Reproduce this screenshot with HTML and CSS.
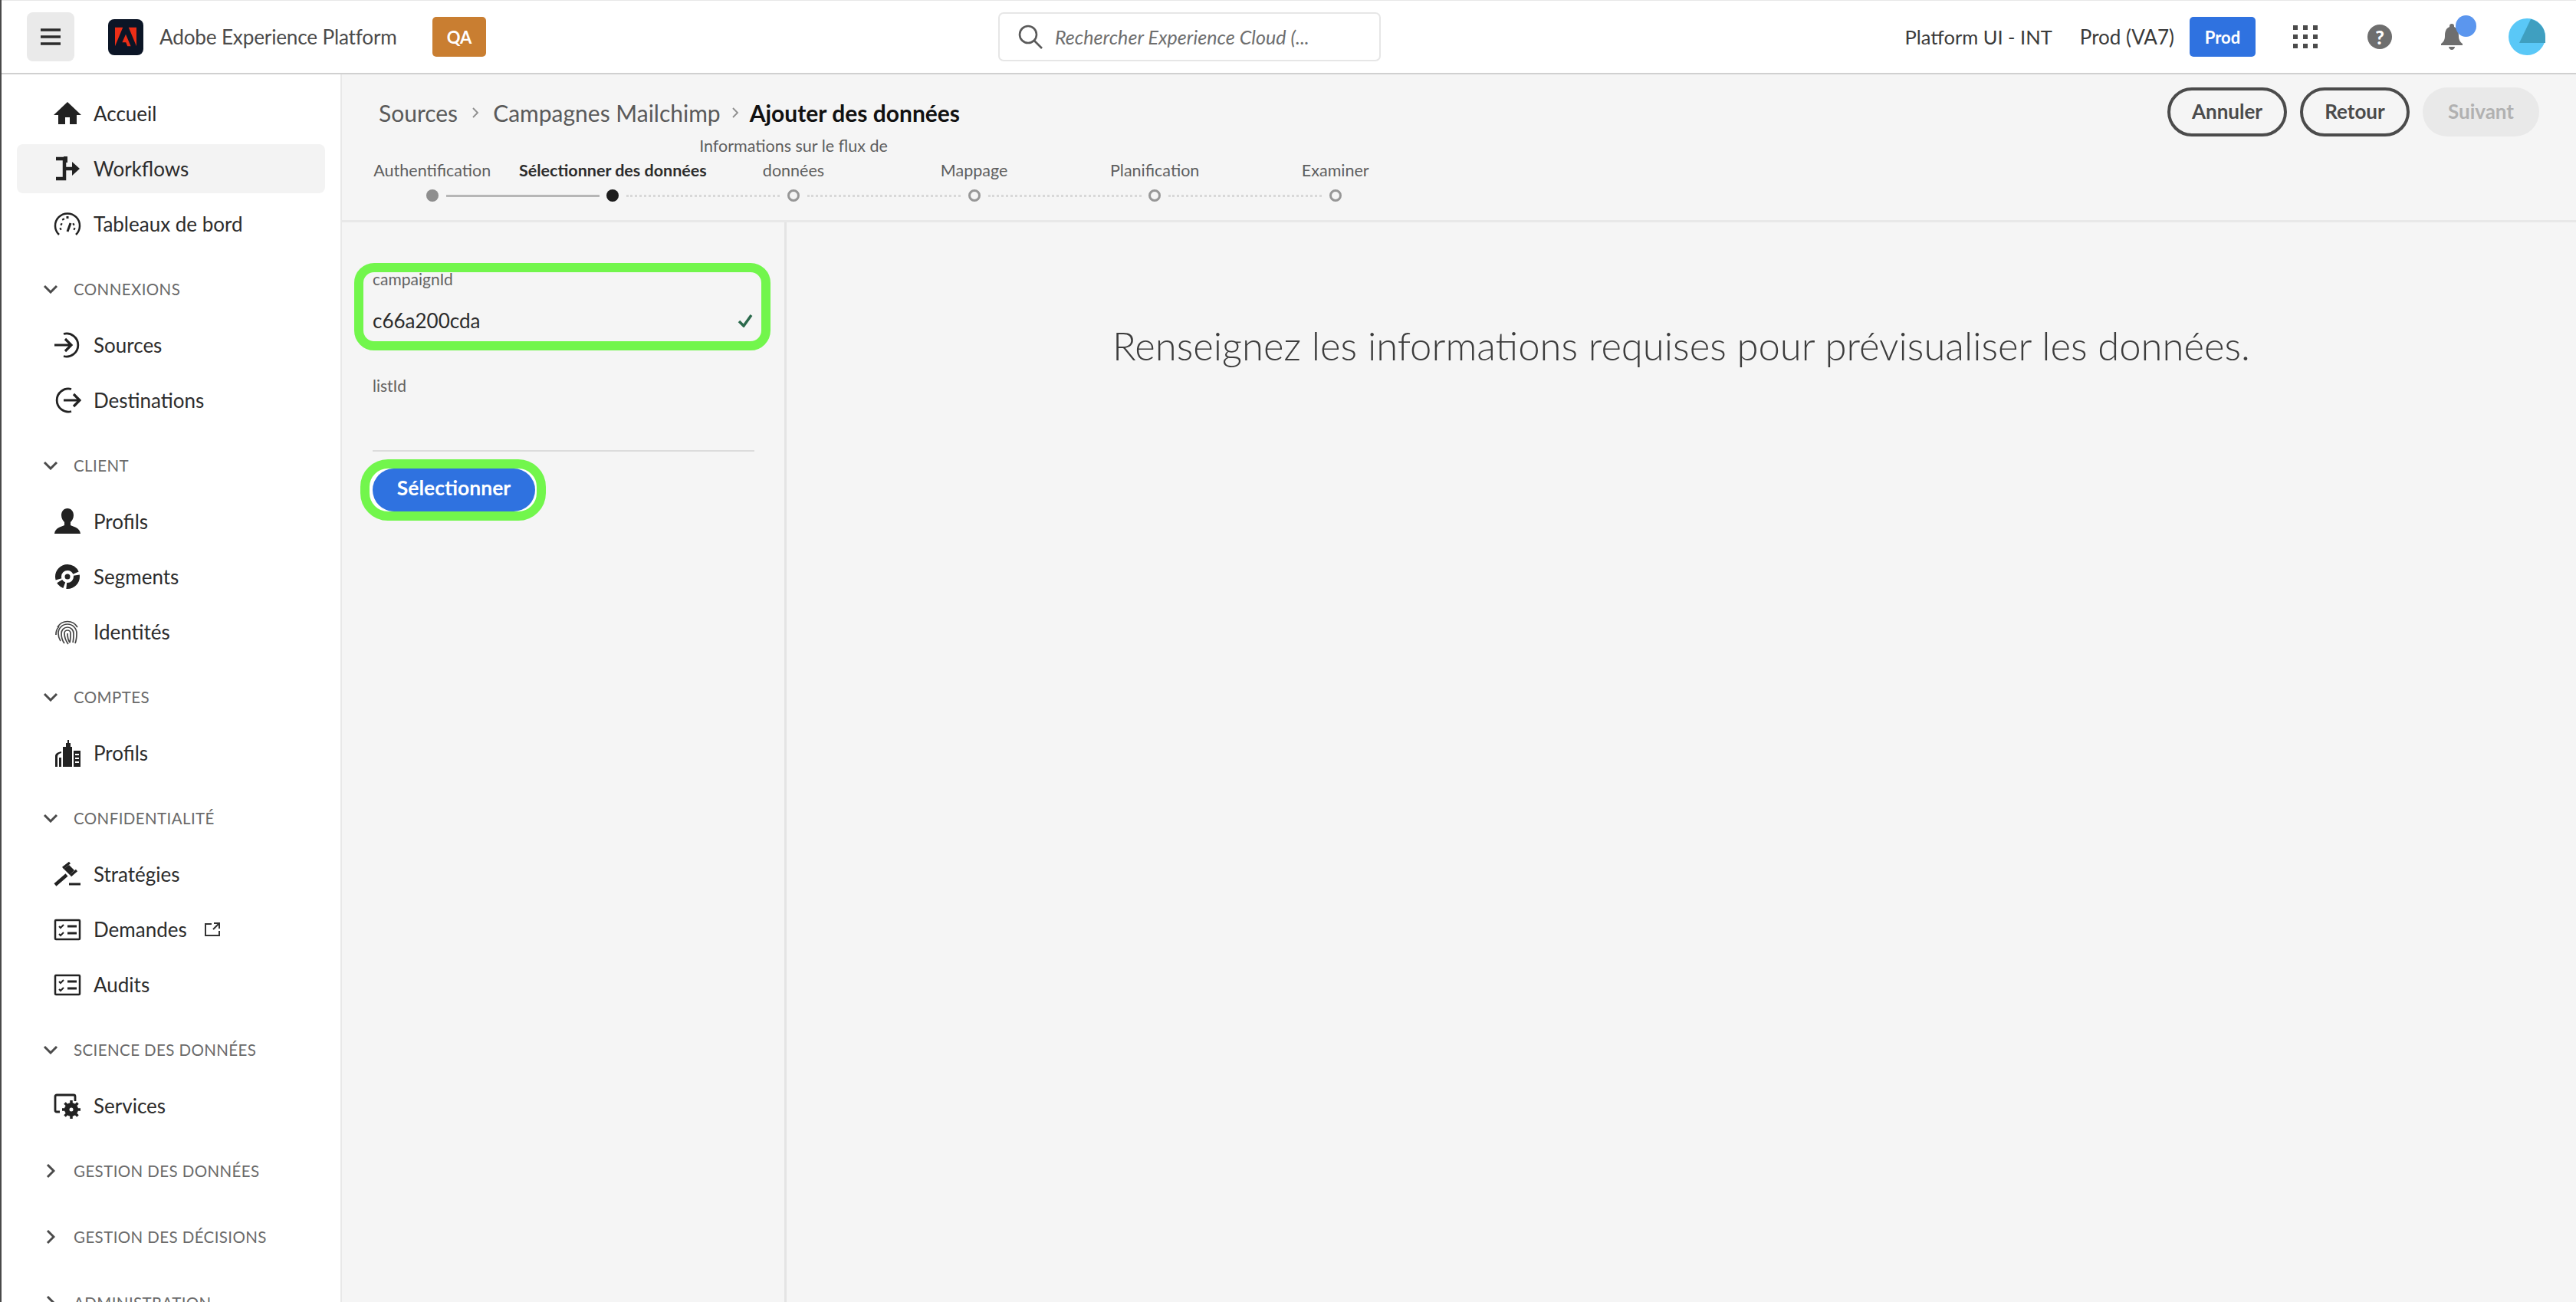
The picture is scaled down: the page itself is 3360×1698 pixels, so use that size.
FILE: index.html

```html
<!DOCTYPE html>
<html lang="fr">
<head>
  <meta charset="UTF-8">
  <title>Adobe Experience Platform</title>
  <link rel="stylesheet" href="styles.css">
</head>
<body>
  <header class="topbar">
    <button class="menu-btn" type="button">
      <svg class="menu-icon" viewBox="0 0 26 22"><path d="M0 2h26M0 11h26M0 20h26"/></svg>
    </button>
    <span class="logo">
      <svg viewBox="0 0 30 26"><path d="M11 0H0v26zM19 0h11v26zM15 9.600 22.100 26h-4.700l-2.100-5.300h-5.200z"/></svg>
    </span>
    <span class="app-name">Adobe Experience Platform</span>
    <span class="badge badge-qa">QA</span>
    <div class="search">
      <svg class="search-icon" viewBox="0 0 32 32"><circle cx="13" cy="13" r="11"/><path d="M21 21l10 10"/></svg>
      <span class="search-text">Rechercher Experience Cloud (...</span>
    </div>
    <div class="top-right">
      <span class="org">Platform UI - INT</span>
      <span class="sandbox">Prod (VA7)</span>
      <span class="badge badge-prod">Prod</span>
      <svg class="apps-icon" viewBox="0 0 32 30"><path d="M0 0h6v6H0zM13 0h6v6h-6zM26 0h6v6h-6zM0 12h6v6H0zM13 12h6v6h-6zM26 12h6v6h-6zM0 24h6v6H0zM13 24h6v6h-6zM26 24h6v6h-6z"/></svg>
      <span class="help">?</span>
      <span class="bell">
        <svg viewBox="0 0 28 34"><path d="M14 0c-2 0-3 1-3 3v1C6 6 5 11 5 16c0 5-2 8-5 10v2h28v-2c-3-2-5-5-5-10 0-5-1-10-6-12V3c0-2-1-3-3-3zM10 30h8c0 2-2 4-4 4s-4-2-4-4z"/></svg>
        <span class="bell-dot"></span>
      </span>
      <svg class="avatar" viewBox="0 0 48 48"><circle cx="24" cy="24" r="24" fill="#5ac8f7"/><path d="M29 1a24 24 0 0 1 19 23v8H14z" fill="#3f9fc0"/></svg>
    </div>
  </header>

  <div class="layout">
    <nav class="sidebar">
      <a class="nav-item">
        <svg class="nav-icon solid" viewBox="0 0 36 36"><path d="M18 3 0 20h6v12h9v-9h6v9h9V20h6z"/></svg>
        Accueil
      </a>
      <a class="nav-item active">
        <svg class="nav-icon" viewBox="0 0 36 36"><path d="M3 5h11v26H3M14 18h12" stroke-width="4.500"/><path class="fill" d="M24 9l10 9-10 9zM13 2h5v8h-5z"/></svg>
        Workflows
      </a>
      <a class="nav-item">
        <svg class="nav-icon" viewBox="0 0 36 36"><path d="M7 32A16 16 0 1 1 29 32" stroke-width="2.500"/><path d="M18 28l4-11M9 18l2 1M12 11l1 2M18 8v3M27 18l-2 1M8 25l2-1M28 25l-2-1" stroke-width="3"/></svg>
        Tableaux de bord
      </a>

      <div class="nav-section"><svg class="chev" viewBox="0 0 20 12"><path d="M2 2l8 8 8-8"/></svg>CONNEXIONS</div>
      <a class="nav-item">
        <svg class="nav-icon" viewBox="0 0 36 36"><path d="M13 3.500A15 15 0 1 1 13 32.500" stroke-width="2.800"/><path d="M1 18h22M15 10l8 8-8 8" stroke-width="3.200"/></svg>
        Sources
      </a>
      <a class="nav-item">
        <svg class="nav-icon" viewBox="0 0 36 36"><path d="M23 3.500A15 15 0 1 0 23 32.500" stroke-width="2.800"/><path d="M13 18h21M26 10l8 8-8 8" stroke-width="3.200"/></svg>
        Destinations
      </a>

      <div class="nav-section"><svg class="chev" viewBox="0 0 20 12"><path d="M2 2l8 8 8-8"/></svg>CLIENT</div>
      <a class="nav-item">
        <svg class="nav-icon solid" viewBox="0 0 36 36"><path d="M18 1c-5 0-8 4-8 9 0 4 2 7 4 9v4c-4 2-12 3-13 11h34c-1-8-9-9-13-11v-4c2-2 4-5 4-9 0-5-3-9-8-9z"/></svg>
        Profils
      </a>
      <a class="nav-item">
        <svg class="nav-icon" viewBox="0 0 36 36"><circle cx="18" cy="18" r="12" stroke-width="8" stroke-dasharray="20 3 8 3 36 3"/><circle class="fill" cx="18" cy="18" r="3.500"/></svg>
        Segments
      </a>
      <a class="nav-item">
        <svg class="nav-icon print" viewBox="0 0 36 36"><path d="M5 12A15 15 0 0 1 31 12M3 22A15 15 0 0 1 7 11M9 30c-2-3-3-6-3-10a12 12 0 0 1 24 0c0 5 0 8-2 13M14 33c-3-4-4-8-4-13a8 8 0 0 1 16 0c0 4 0 8-1 12M19 34c-3-4-5-9-5-14a4 4 0 0 1 8 0c0 5 0 8-1 12M18 20c0 5 1 9 3 12"/></svg>
        Identités
      </a>

      <div class="nav-section"><svg class="chev" viewBox="0 0 20 12"><path d="M2 2l8 8 8-8"/></svg>COMPTES</div>
      <a class="nav-item">
        <svg class="nav-icon solid" viewBox="0 0 36 36"><path d="M12 10h4V5h2V1h2v4h2v5h2v26H12zM26 15h9v21h-9zM2 36V22c0-3 3-5 8-6v2c-3 1-5 2-5 5v13zM7 24h3v12H7z"/><path d="M28 19h5v2h-5zM28 24h5v2h-5zM28 29h5v2h-5z" fill="#fff"/></svg>
        Profils
      </a>

      <div class="nav-section"><svg class="chev" viewBox="0 0 20 12"><path d="M2 2l8 8 8-8"/></svg>CONFIDENTIALITÉ</div>
      <a class="nav-item">
        <svg class="nav-icon" viewBox="0 0 36 36"><path d="M2 32l15-13" stroke-width="4.500"/><path class="fill" d="M13 11l7-5 7 7-6 6z"/><path d="M12 10l9-7M22 20l8-7M20 31h15" stroke-width="3.200"/></svg>
        Stratégies
      </a>
      <a class="nav-item">
        <svg class="nav-icon" viewBox="0 0 36 36"><rect x="2" y="6" width="32" height="25" rx="1" stroke-width="2.500"/><path d="M7 14l2 2 4-4M7 24l2 2 4-4" stroke-width="2"/><path d="M18 14h12M18 23h12" stroke-width="3"/></svg>
        Demandes
        <svg class="ext-icon" viewBox="0 0 20 20"><path d="M9 3H1v15h18v-6M12 2h7v7M19 2l-8 8"/></svg>
      </a>
      <a class="nav-item">
        <svg class="nav-icon" viewBox="0 0 36 36"><rect x="2" y="6" width="32" height="25" rx="1" stroke-width="2.500"/><path d="M7 14l2 2 4-4M7 24l2 2 4-4" stroke-width="2"/><path d="M18 14h12M18 23h12" stroke-width="3"/></svg>
        Audits
      </a>

      <div class="nav-section"><svg class="chev" viewBox="0 0 20 12"><path d="M2 2l8 8 8-8"/></svg>SCIENCE DES DONNÉES</div>
      <a class="nav-item">
        <svg class="nav-icon" viewBox="0 0 36 36"><path d="M8 26H4a2 2 0 0 1-2-2V6a2 2 0 0 1 2-2h22a2 2 0 0 1 2 2v6" stroke-width="2.800"/><circle cx="23" cy="23" r="6" stroke-width="6"/><path d="M23 11v24M11 23h24M14.500 14.500l17 17M31.500 14.500l-17 17" stroke-width="3.500"/><circle class="white" cx="23" cy="23" r="2.500"/></svg>
        Services
      </a>

      <div class="nav-section"><svg class="chev chev-right" viewBox="0 0 20 12"><path d="M2 2l8 8 8-8"/></svg>GESTION DES DONNÉES</div>
      <div class="nav-section"><svg class="chev chev-right" viewBox="0 0 20 12"><path d="M2 2l8 8 8-8"/></svg>GESTION DES DÉCISIONS</div>
      <div class="nav-section"><svg class="chev chev-right" viewBox="0 0 20 12"><path d="M2 2l8 8 8-8"/></svg>ADMINISTRATION</div>
    </nav>

    <main class="main">
      <div class="page-head">
        <div class="head-top">
          <div class="crumbs">
            <span class="crumb">Sources</span>
            <svg class="crumb-sep" viewBox="0 0 10 16"><path d="M2 2l6 6-6 6"/></svg>
            <span class="crumb">Campagnes Mailchimp</span>
            <svg class="crumb-sep crumb-sep-last" viewBox="0 0 10 16"><path d="M2 2l6 6-6 6"/></svg>
            <span class="crumb crumb-current">Ajouter des données</span>
          </div>
          <div class="actions">
            <button class="btn btn-outline" type="button">Annuler</button>
            <button class="btn btn-outline btn-back" type="button">Retour</button>
            <button class="btn btn-disabled" type="button">Suivant</button>
          </div>
        </div>
        <div class="steps">
          <div class="step done"><span class="step-label">Authentification</span><span class="step-track"><i class="dot"></i></span></div>
          <div class="step current"><span class="step-label">Sélectionner des données</span><span class="step-track"><i class="dot"></i></span></div>
          <div class="step"><span class="step-label">Informations sur le flux de<br>données</span><span class="step-track"><i class="dot"></i></span></div>
          <div class="step"><span class="step-label">Mappage</span><span class="step-track"><i class="dot"></i></span></div>
          <div class="step"><span class="step-label">Planification</span><span class="step-track"><i class="dot"></i></span></div>
          <div class="step last"><span class="step-label">Examiner</span><span class="step-track"><i class="dot"></i></span></div>
        </div>
      </div>

      <div class="content">
        <form class="filters">
          <div class="field field-marked">
            <div class="field-label">campaignId</div>
            <div class="field-value">
              <span>c66a200cda</span>
              <svg class="check" viewBox="0 0 20 18"><path d="M2 10l6 6L18 2"/></svg>
            </div>
          </div>
          <div class="field field-empty">
            <div class="field-label">listId</div>
          </div>
          <div class="submit-mark">
            <button class="btn-primary" type="button">Sélectionner</button>
          </div>
        </form>
        <div class="preview">Renseignez les informations requises pour prévisualiser les données.</div>
      </div>
    </main>
  </div>
</body>
</html>
```

FILE: styles.css

```css
html, body {
  margin: 0;
  height: 100%;
}

body {
  display: flex;
  flex-direction: column;
  height: 1698px;
  overflow: hidden;
  font-family: Lato, "Open Sans", sans-serif;
  background: #f5f5f5;
  color: #2c2c2c;
  border-left: 2px solid #4a4a4a;
  box-sizing: border-box;
}

button {
  font-family: inherit;
}

/* top bar */
.topbar {
  display: flex;
  align-items: center;
  flex: 0 0 97px;
  box-sizing: border-box;
  padding-left: 33px;
  background: white;
  border-top: 1px solid #e8e8e8;
  border-bottom: 2px solid #d0d0d0;
}

.menu-btn {
  display: flex;
  align-items: center;
  justify-content: center;
  width: 62px;
  height: 64px;
  padding: 0;
  border: none;
  border-radius: 8px;
  background: #eaeaea;
}

.menu-icon {
  width: 26px;
  height: 22px;
  fill: none;
  stroke: #2c2c2c;
  stroke-width: 3.500;
}

.logo {
  display: flex;
  align-items: center;
  justify-content: center;
  width: 46px;
  height: 47px;
  margin-left: 44px;
  border-radius: 8px;
  background: #0b1526;
}

.logo svg {
  width: 28px;
  height: 26px;
  fill: #eb2e17;
}

.app-name {
  width: 315px;
  margin-left: 21px;
  font-size: 26.200px;
  letter-spacing: -0.2px;
  color: #4b4b4b;
  white-space: nowrap;
}

.badge {
  display: flex;
  align-items: center;
  justify-content: center;
  height: 52px;
  border-radius: 5px;
  color: white;
  font-size: 22px;
  font-weight: 700;
}

.badge-qa {
  width: 70px;
  margin-left: 41px;
  background: #c97e31;
}

.badge-prod {
  width: 86px;
  margin-left: 20px;
  background: #2f72e0;
}

.search {
  display: flex;
  align-items: center;
  box-sizing: border-box;
  width: 499px;
  height: 64px;
  margin-left: 668px;
  padding-left: 24px;
  background: white;
  border: 2px solid #e6e6e6;
  border-radius: 7px;
}

.search-icon {
  width: 32px;
  height: 32px;
  fill: none;
  stroke: #5a5a5a;
  stroke-width: 2.600;
}

.search-text {
  margin-left: 16px;
  font-size: 25px;
  letter-spacing: 0.05px;
  font-style: italic;
  color: #6e6e6e;
  white-space: nowrap;
}

.top-right {
  display: flex;
  align-items: center;
  margin-left: auto;
  padding-right: 40px;
}

.org, .sandbox {
  font-size: 26px;
  color: #3a3a3a;
  white-space: nowrap;
}

.org {
  font-size: 25.500px;
}

.sandbox {
  margin-left: 36px;
}

.apps-icon {
  width: 32px;
  height: 30px;
  margin-left: 49px;
  fill: #4b4b4b;
}

.help {
  display: flex;
  align-items: center;
  justify-content: center;
  width: 32px;
  height: 32px;
  margin-left: 65px;
  border-radius: 50%;
  background: #6e6e6e;
  color: white;
  font-size: 25px;
  font-weight: 900;
}

.bell {
  position: relative;
  display: flex;
  width: 28px;
  height: 34px;
  margin-left: 64px;
}

.bell svg {
  fill: #6e6e6e;
}

.bell-dot {
  position: absolute;
  top: -11px;
  left: 19px;
  width: 27px;
  height: 28px;
  border-radius: 50%;
  background: #5b96ee;
}

.avatar {
  width: 48px;
  height: 48px;
  margin-left: 60px;
}

/* page body */
.layout {
  display: flex;
  flex: 1;
  min-height: 0;
}

.sidebar {
  display: flex;
  flex-direction: column;
  flex: 0 0 444px;
  gap: 8px;
  box-sizing: border-box;
  padding: 19px 20px 0;
  background: white;
  border-right: 2px solid #e8e8e8;
  overflow: hidden;
}

.nav-item {
  display: flex;
  align-items: center;
  flex: 0 0 64px;
  padding-left: 48px;
  border-radius: 8px;
  font-size: 26px;
  color: #2c2c2c;
}

.nav-item.active {
  background: #f3f3f3;
}

.nav-icon {
  width: 36px;
  height: 36px;
  margin-right: 16px;
  fill: none;
  stroke: #222;
}

.nav-icon.solid {
  fill: #222;
  stroke: none;
}

.nav-icon .fill {
  fill: #222;
  stroke: none;
}

.nav-icon .white {
  fill: white;
  stroke: none;
}

.nav-icon.print {
  stroke: #444;
  stroke-width: 1.700;
}

.ext-icon {
  width: 20px;
  height: 20px;
  margin-left: 23px;
  fill: none;
  stroke: #333;
  stroke-width: 2;
}

.nav-section {
  display: flex;
  align-items: center;
  flex: 0 0 62px;
  margin-top: 14px;
  padding: 0 0 2px 34px;
  font-size: 20.500px;
  letter-spacing: 0.4px;
  color: #6a6a6a;
  white-space: nowrap;
}

.chev {
  width: 20px;
  height: 12px;
  margin-right: 20px;
  fill: none;
  stroke: #4b4b4b;
  stroke-width: 3;
}

.chev-right {
  transform: rotate(-90deg);
}

.main {
  display: flex;
  flex-direction: column;
  flex: 1;
  min-width: 0;
}

.page-head {
  flex: 0 0 193px;
  box-sizing: border-box;
  border-bottom: 3px solid #e8e8e8;
}

.head-top {
  display: flex;
  align-items: center;
  justify-content: space-between;
  padding: 17px 48px 0 48px;
}

.crumbs {
  display: flex;
  align-items: center;
  margin-top: 2px;
  font-size: 30px;
  color: #5a5a5a;
  white-space: nowrap;
}

.crumb-current {
  font-weight: 700;
  color: #111;
}

.crumb-sep {
  width: 10px;
  height: 16px;
  margin: 0 18px;
  fill: none;
  stroke: #8e8e8e;
  stroke-width: 1.800;
}

.crumb-sep-last {
  margin: 0 14px;
}

.actions {
  display: flex;
  gap: 17px;
}

.btn {
  box-sizing: border-box;
  width: 156px;
  height: 64px;
  padding: 0 0 3px;
  border-radius: 32px;
  font-size: 26px;
  font-weight: 700;
}

.btn-outline {
  border: 4px solid #4b4b4b;
  background: transparent;
  color: #4b4b4b;
}

.btn-back {
  width: 143px;
}

.btn-disabled {
  width: 152px;
  border: none;
  background: #e9e9e9;
  color: #b1b1b1;
}

/* stepper */
.steps {
  display: grid;
  grid-template-columns: repeat(6, 235.6px);
  margin-top: -4px;
}

.step {
  display: flex;
  flex-direction: column;
  align-items: center;
  justify-content: flex-end;
}

.step-label {
  margin-bottom: 2px;
  font-size: 21.500px;
  line-height: 32px;
  text-align: center;
  white-space: nowrap;
  color: #5e5e5e;
}

.step.current .step-label {
  font-weight: 700;
  font-size: 21.500px;
  color: #2c2c2c;
}

.step-track {
  position: relative;
  display: flex;
  align-items: center;
  justify-content: center;
  width: 100%;
  height: 22px;
  margin-top: 4px;
}

.step-track::after {
  content: "";
  position: absolute;
  top: 10px;
  left: calc(50% + 18px);
  width: 200px;
  border-top: 3px dotted #d8d8d8;
}

.step.done .step-track::after {
  border-top: 3px solid #b6b6b6;
}

.step.last .step-track::after {
  display: none;
}

.dot {
  box-sizing: border-box;
  width: 16px;
  height: 16px;
  border: 3px solid #979797;
  border-radius: 50%;
}

.step.done .dot {
  border: none;
  background: #8e8e8e;
}

.step.current .dot {
  border: none;
  background: #1d1d1d;
}

.content {
  display: flex;
  flex: 1;
  min-height: 0;
}

.filters {
  flex: 0 0 580px;
  box-sizing: border-box;
  padding: 53px 0 0 16px;
  border-right: 3px solid #e4e4e4;
}

.field-label {
  font-size: 21px;
  line-height: 24px;
  color: #636363;
}

.field-marked {
  box-sizing: border-box;
  width: 543px;
  padding: 0 11px 11px 12px;
  border: 12px solid #72f64c;
  border-radius: 26px;
}

.field-marked .field-label {
  margin-top: -3px;
}

.field-value {
  display: flex;
  align-items: center;
  justify-content: space-between;
  margin-top: 26px;
  font-size: 26px;
  line-height: 32px;
  color: #2c2c2c;
}

.check {
  width: 20px;
  height: 18px;
  fill: none;
  stroke: #2b6a4c;
  stroke-width: 3.500;
}

.field-empty {
  box-sizing: border-box;
  width: 498px;
  height: 98px;
  margin: 34px 0 0 24px;
  border-bottom: 2px solid #dcdcdc;
}

.submit-mark {
  display: flex;
  box-sizing: border-box;
  width: 242px;
  height: 80px;
  margin: 10px 0 0 8px;
  padding: 0 2px 0 4px;
  border: 12px solid #72f64c;
  border-radius: 36px;
  background: white;
}

.btn-primary {
  flex: 1;
  padding: 0 0 6px;
  border: none;
  border-radius: 28px;
  background: #2f72e0;
  color: white;
  font-size: 26.500px;
  font-weight: 700;
}

.preview {
  flex: 1;
  padding-top: 131px;
  font-size: 50.800px;
  font-weight: 300;
  line-height: 60px;
  text-align: center;
  color: #3c3c3c;
  white-space: nowrap;
}
```
